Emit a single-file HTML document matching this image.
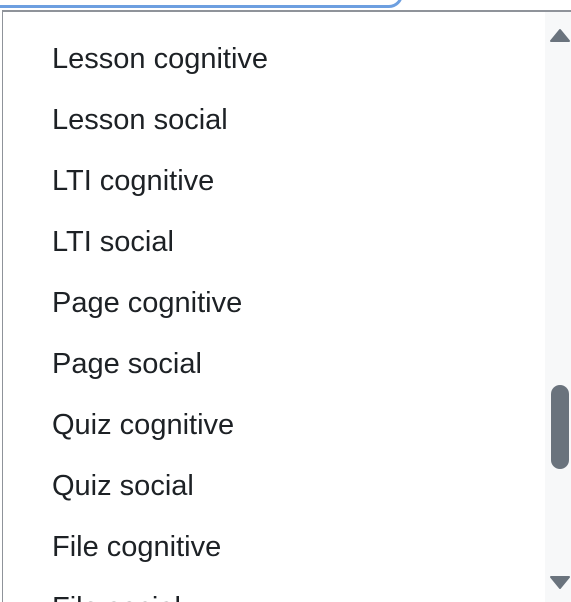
<!DOCTYPE html>
<html><head><meta charset="utf-8"><style>
html,body{margin:0;padding:0;width:571px;height:602px;overflow:hidden;background:#fff;position:relative;}
.top{position:absolute;left:-20px;top:-41px;width:417px;height:43px;border:3px solid #6d9fe0;border-radius:14px;background:#fff;}
.list{position:absolute;left:2px;top:10px;width:580px;height:600px;border-left:1px solid #8f939a;border-top:2px solid #8f939a;background:#fff;}
.item{position:absolute;left:52px;font-family:"Liberation Sans",sans-serif;font-size:29px;color:#1d2125;line-height:30px;white-space:nowrap;}
.sb{position:absolute;left:545px;top:12px;width:26px;height:590px;background:#f7f8f9;}
.thumb{position:absolute;left:551px;top:385px;width:18px;height:84px;background:#6a737d;border-radius:9px;}
</style></head><body>
<div class="top"></div>
<div class="list"></div>
<div class="sb"></div>
<div class="thumb"></div>
<svg style="position:absolute;left:549px;top:26px" width="22" height="18"><path d="M2 15 L11 4 L20 15 Z" fill="#6a737d" stroke="#6a737d" stroke-linejoin="round" stroke-width="2"/></svg>
<svg style="position:absolute;left:549px;top:574px" width="22" height="18"><path d="M2 3 L20 3 L11 14 Z" fill="#6a737d" stroke="#6a737d" stroke-linejoin="round" stroke-width="2"/></svg>
<div class="item" style="top:44px">Lesson cognitive</div>
<div class="item" style="top:105px">Lesson social</div>
<div class="item" style="top:166px">LTI cognitive</div>
<div class="item" style="top:227px">LTI social</div>
<div class="item" style="top:288px">Page cognitive</div>
<div class="item" style="top:349px">Page social</div>
<div class="item" style="top:410px">Quiz cognitive</div>
<div class="item" style="top:471px">Quiz social</div>
<div class="item" style="top:532px">File cognitive</div>
<div class="item" style="top:593px">File social</div>
</body></html>
